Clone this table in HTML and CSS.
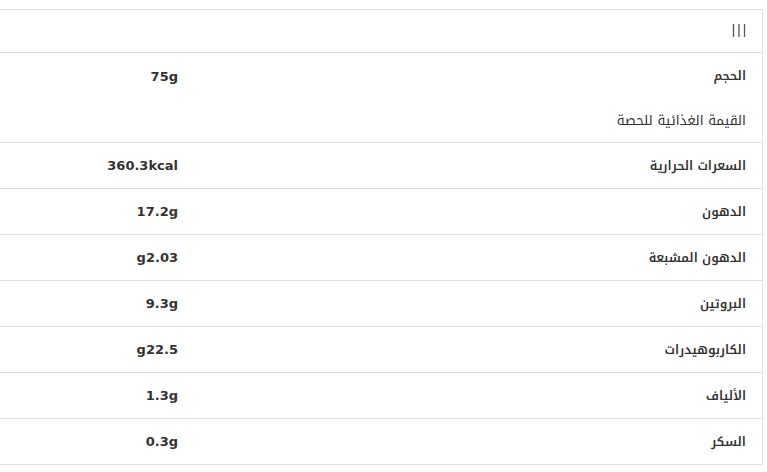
FILE: index.html
```html
<!DOCTYPE html>
<html lang="ar" dir="rtl">
<head>
<meta charset="utf-8">
<link rel="stylesheet" href="styles.css">
</head>
<body>
<div class="specs">
  <div class="head">
    <svg class="bars" width="14" height="13" viewBox="0 0 14 13"><path d="M1.5 0V13M7 0V13M12.5 0V13" stroke="#555" stroke-width="1.3"/></svg>
  </div>
  <div class="row noline"><div class="label">الحجم</div><div class="value">75g</div></div>
  <div class="row sub"><div class="label">القيمة الغذائية للحصة</div><div class="value"></div></div>
  <div class="row"><div class="label">السعرات الحرارية</div><div class="value">360.3kcal</div></div>
  <div class="row"><div class="label">الدهون</div><div class="value">17.2g</div></div>
  <div class="row"><div class="label">الدهون المشبعة</div><div class="value">g2.03</div></div>
  <div class="row"><div class="label">البروتين</div><div class="value">9.3g</div></div>
  <div class="row"><div class="label">الكاربوهيدرات</div><div class="value">g22.5</div></div>
  <div class="row"><div class="label">الألياف</div><div class="value">1.3g</div></div>
  <div class="row"><div class="label">السكر</div><div class="value">0.3g</div></div>
</div>
</body>
</html>
```
FILE: styles.css
```css
html, body { margin: 0; padding: 0; background: #fff; }
body {
  font-family: "DejaVu Sans", sans-serif;
  color: #333;
}
.specs {
  margin: 9px 4px 0 0;
  border-top: 1px solid #dedede;
  border-right: 1px solid #dedede;
}
.head {
  height: 42px;
  border-bottom: 1px solid #dedede;
  display: flex;
  align-items: center;
  padding-right: 16px;
}
.bars { display: block; margin-top: -1px; }
.row {
  display: grid;
  grid-template-columns: 1fr 194px;
  height: 45px;
  align-items: center;
  border-bottom: 1px solid #dedede;
}
.row.noline { border-bottom: none; height: 46px; }
.row.sub { height: 43px; }
.label, .value {
  padding-right: 16px;
  white-space: nowrap;
}
.value {
  font-size: 13px;
  font-weight: 700;
}
.label {
  font-family: "Noto Kufi Arabic", sans-serif;
  font-size: 12.5px;
  font-weight: 600;
}
.sub .label { font-size: 13.5px; font-weight: 400; }
```
